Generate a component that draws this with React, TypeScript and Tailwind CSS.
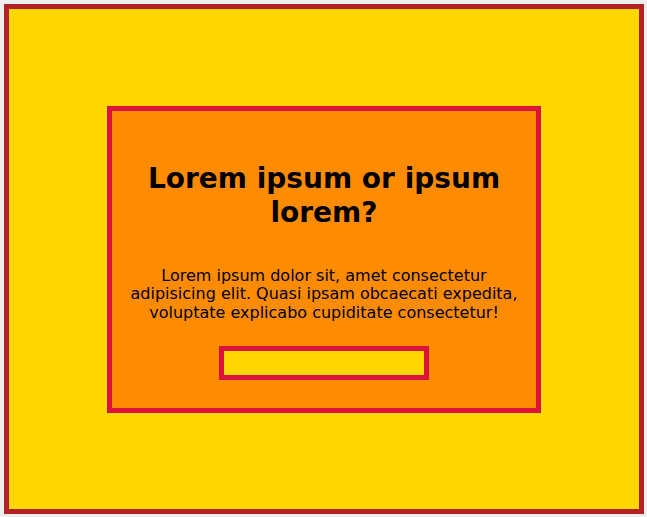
export default function App() {
  return (
    <div className="min-h-screen bg-[#eeeeee] pl-[4px] pt-[4px] font-['DejaVu_Sans',sans-serif]">
      <div className="flex h-[510px] w-[640px] items-center justify-center border-[5px] border-[#b22222] bg-[#ffd700]">
        <div className="flex h-[307px] w-[434px] flex-col items-center border-[5px] border-[#dc143c] bg-[#ff8c00] px-4 pt-[51px] text-center text-black">
          <h2 className="text-[28px] leading-[34px] font-bold">
            Lorem ipsum or ipsum lorem?
          </h2>
          <p className="mt-[37px] text-base leading-[18.5px]">
            Lorem ipsum dolor sit, amet consectetur adipisicing elit. Quasi
            ipsam obcaecati expedita, voluptate explicabo cupiditate
            consectetur!
          </p>
          <button className="mt-[24px] h-[34px] w-[210px] border-[5px] border-[#dc143c] bg-[#ffd700]"></button>
        </div>
      </div>
    </div>
  );
}
